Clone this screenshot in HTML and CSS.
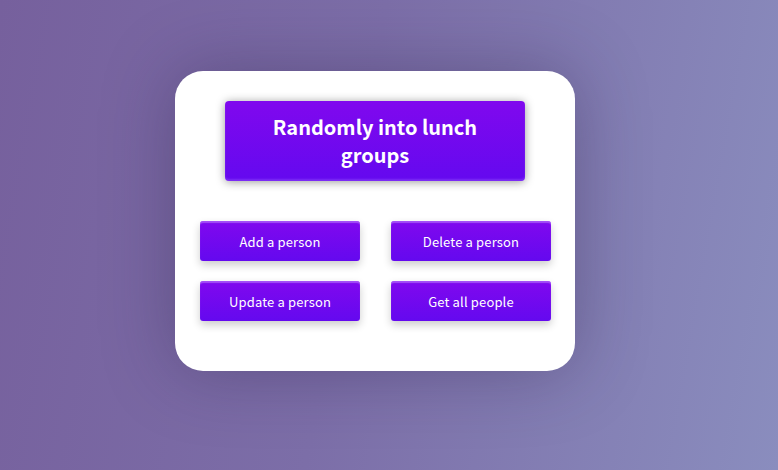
FILE: index.html
```html
<!DOCTYPE html>
<html>
<head>
<meta charset="utf-8">
<link rel="stylesheet" href="styles.css">
</head>
<body>
<main class="page">
  <section class="card">
    <h1 class="title">Randomly into lunch groups</h1>
    <div class="actions">
      <button class="btn">Add a person</button>
      <button class="btn">Delete a person</button>
      <button class="btn">Update a person</button>
      <button class="btn">Get all people</button>
    </div>
  </section>
</main>
</body>
</html>
```
FILE: styles.css
```css
html, body {
  margin: 0;
  padding: 0;
  height: 100%;
}
body {
  background: linear-gradient(100deg, #76609d 0%, #7c6ea8 45%, #8a8dbe 100%);
  font-family: "Noto Sans CJK KR", "Noto Sans", sans-serif;
  overflow: hidden;
}
.page {
  height: 470px;
  display: flex;
  justify-content: flex-start;
  align-items: flex-start;
  padding: 71px 0 0 175px;
  box-sizing: border-box;
}
.card {
  width: 400px;
  height: 300px;
  box-sizing: border-box;
  background: #fff;
  border-radius: 28px;
  box-shadow: 0 0 70px rgba(40, 30, 70, 0.35);
  padding: 30px 25px 0 25px;
  display: flex;
  flex-direction: column;
  align-items: center;
}
.title {
  margin: 0;
  width: 300px;
  height: 80px;
  box-sizing: border-box;
  padding: 0 40px 1px 40px;
  display: flex;
  align-items: center;
  justify-content: center;
  text-align: center;
  color: #fff;
  font-size: 20px;
  font-weight: 700;
  line-height: 28px;
  border-radius: 4px;
  background: linear-gradient(180deg, #8008ee 0%, #6409ef 100%);
  box-shadow: 0 1px 10px rgba(0, 0, 0, 0.4), inset 0 -2px 2px rgba(160, 100, 255, 0.4);
}
.actions {
  margin-top: 40px;
  display: grid;
  grid-template-columns: 160px 160px;
  column-gap: 31px;
  row-gap: 20px;
  align-self: stretch;
}
.btn {
  width: 160px;
  height: 40px;
  border: none;
  border-radius: 3px;
  color: #fff;
  font-family: "Noto Sans CJK KR", "Noto Sans", sans-serif;
  font-size: 13px;
  letter-spacing: 0.15px;
  background: linear-gradient(180deg, #8008ee 0%, #6409ef 100%);
  box-shadow: 0 4px 8px rgba(0, 0, 0, 0.2), inset 0 2px 1px rgba(200, 150, 255, 0.5);
  padding: 0;
}
```
